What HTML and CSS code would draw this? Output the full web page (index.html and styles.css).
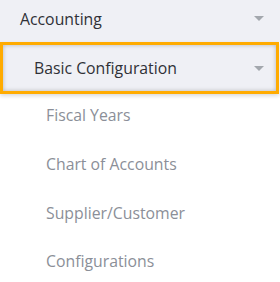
FILE: index.html
```html
<!DOCTYPE html>
<html lang="en">
<head>
    <meta charset="UTF-8">
    <meta name="viewport" content="width=device-width, initial-scale=1.0">
    <title>Accounting Menu</title>
    <link rel="stylesheet" href="styles.css">
</head>
<body>

    <nav class="side-menu">
        <div class="menu-item">
            <span>Accounting</span>
            <span class="caret"></span>
        </div>

        <div class="menu-item sub-head active">
            <span>Basic Configuration</span>
            <span class="caret"></span>
        </div>

        <ul class="sub-list">
            <li>Fiscal Years</li>
            <li>Chart of Accounts</li>
            <li>Supplier/Customer</li>
            <li>Configurations</li>
        </ul>
    </nav>

</body>
</html>
```

FILE: styles.css
```css
body {
    margin: 0;
    background-color: #ffffff;
    font-family: "Open Sans", Arial, sans-serif;
}
.side-menu {
    width: 280px;
}
.menu-item {
    display: flex;
    align-items: center;
    justify-content: space-between;
    height: 37px;
    padding: 0 16px 5px 20px;
    background-color: #eff0f5;
    color: #2f3037;
    font-size: 15.8px;
}
.sub-head {
    height: 46px;
    margin-right: 1px;
    padding: 0 12px 0 31px;
    border: 3px solid #ffab00;
    box-shadow: inset 0 0 4px rgba(0, 0, 0, 0.25), 0 2px 4px rgba(0, 0, 0, 0.15);
}
.caret {
    width: 0;
    height: 0;
    border-left: 5px solid transparent;
    border-right: 5px solid transparent;
    border-top: 5px solid #a3a7ad;
}
.sub-list {
    list-style: none;
    margin: 0;
    padding: 0;
}
.sub-list li {
    height: 43px;
    line-height: 43px;
    padding-bottom: 5.8px;
    padding-left: 46px;
    color: #8b8f98;
    font-size: 15.8px;
}
```
